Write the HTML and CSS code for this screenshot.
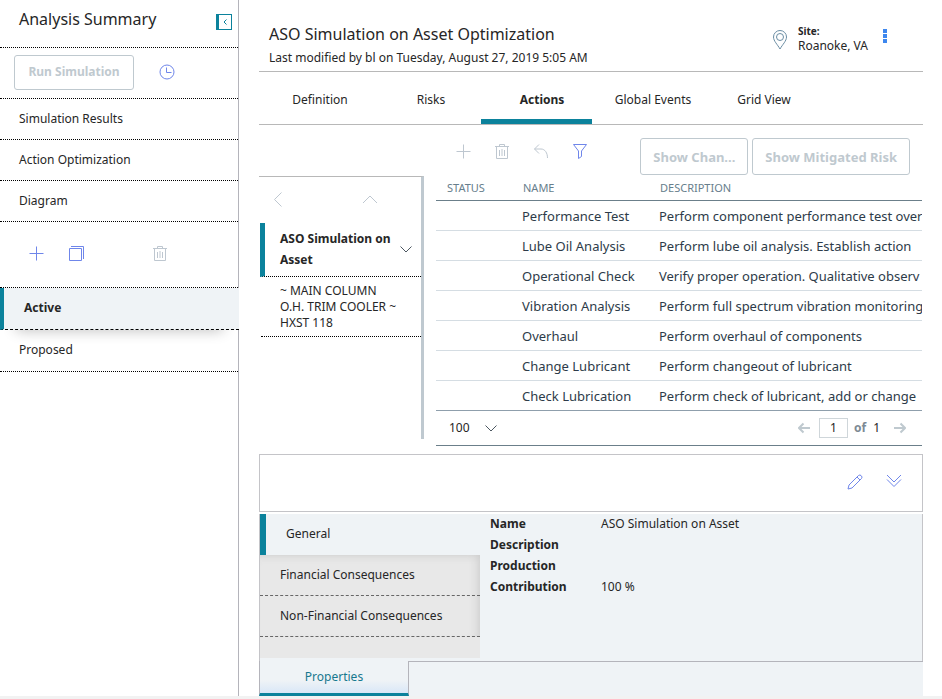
FILE: index.html
```html
<!DOCTYPE html>
<html lang="en">
<head>
<meta charset="utf-8">
<title>Analysis Summary</title>
<link rel="stylesheet" href="styles.css">
</head>
<body>
<svg class="defs" aria-hidden="true">
  <symbol id="i-plus" viewBox="0 0 16 16"><path d="M8.500 1.500v14M1.500 8.500h14"/></symbol>
  <symbol id="i-trash" viewBox="0 0 16 16"><path d="M1 3.500h14M2.500 3.500v12h11v-12M5.500 3V1.500h5V3M5.500 7v6M8 6v7M10.500 7v6"/></symbol>
  <symbol id="i-left" viewBox="0 0 16 16"><path d="M11.500 1.500L4.500 8.500l7 7"/></symbol>
  <symbol id="i-up" viewBox="0 0 16 16"><path d="M1 12l7-7 7 7"/></symbol>
  <symbol id="i-down" viewBox="0 0 12 12"><path d="M.5 3.500L6 9l5.500-5.500"/></symbol>
</svg>
<div class="app">
  <aside class="sidebar">
    <header class="side-head">
      <h1 class="title">Analysis Summary</h1>
      <button class="collapse" aria-label="Collapse"><svg viewBox="0 0 12 12"><path d="M7.500 3.500L5 6l2.500 2.500"/></svg></button>
    </header>
    <div class="run-row">
      <button class="btn btn-run" disabled>Run Simulation</button>
      <button class="icon" aria-label="History"><svg viewBox="0 0 16 16"><circle cx="8" cy="8" r="7"/><path d="M7.500 3.500v5h5"/></svg></button>
    </div>
    <nav class="side-nav">
      <a href="#">Simulation Results</a>
      <a href="#">Action Optimization</a>
      <a href="#">Diagram</a>
    </nav>
    <div class="side-tools">
      <button class="icon" aria-label="Add"><svg><use href="#i-plus"/></svg></button>
      <button class="icon" aria-label="Copy"><svg viewBox="0 0 16 16"><path d="M1.500 3.500h12v12h-12zM3 1.500h12.500V14"/></svg></button>
      <button class="icon muted push" aria-label="Delete" disabled><svg><use href="#i-trash"/></svg></button>
    </div>
    <nav class="side-nav views">
      <a class="active" href="#">Active</a>
      <a href="#">Proposed</a>
    </nav>
  </aside>

  <main class="main">
    <header class="page-head">
      <div class="page-name">
        <h2 class="title">ASO Simulation on Asset Optimization</h2>
        <p>Last modified by bl on Tuesday, August 27, 2019 5:05 AM</p>
      </div>
      <svg class="pin" viewBox="0 0 14 20"><path d="M7 19C4.500 14.500.5 11 .5 7a6.500 6.500 0 0 1 13 0c0 4-4 7.500-6.500 12z"/><circle cx="7" cy="7" r="3.500"/></svg>
      <div class="site"><strong>Site:</strong><span>Roanoke, VA</span></div>
      <button class="more" aria-label="More"><i></i><i></i><i></i></button>
    </header>

    <nav class="tabs">
      <a href="#">Definition</a>
      <a href="#">Risks</a>
      <a class="active" href="#">Actions</a>
      <a href="#">Global Events</a>
      <a href="#">Grid View</a>
    </nav>

    <div class="split">
      <section class="tree">
        <div class="tree-tools">
          <button class="icon muted" aria-label="Back"><svg><use href="#i-left"/></svg></button>
          <button class="icon muted" aria-label="Up"><svg><use href="#i-up"/></svg></button>
        </div>
        <a class="node" href="#"><span>ASO Simulation on Asset</span><svg class="chev"><use href="#i-down"/></svg></a>
        <a class="leaf" href="#">~ MAIN COLUMN O.H.&nbsp;TRIM COOLER&nbsp;~ HXST&nbsp;118</a>
      </section>

      <section class="grid">
        <div class="grid-tools">
          <button class="icon muted" aria-label="Add" disabled><svg><use href="#i-plus"/></svg></button>
          <button class="icon muted" aria-label="Delete" disabled><svg><use href="#i-trash"/></svg></button>
          <button class="icon muted" aria-label="Undo" disabled><svg viewBox="0 0 16 16"><path d="M6 1.500L1.500 6 6 10.500M1.500 6H8c4 0 6.500 4 6.500 9"/></svg></button>
          <button class="icon" aria-label="Filter"><svg viewBox="0 0 16 16"><path d="M1.500 1.500h13L9.500 8v5.500l-3 2V8z"/></svg></button>
          <div class="grid-actions">
            <button class="btn btn-grid" disabled>Show Chan...</button>
            <button class="btn btn-grid" disabled>Show Mitigated Risk</button>
          </div>
        </div>
        <div class="table-wrap">
          <table>
            <thead><tr><th class="c-status">STATUS</th><th class="c-name">NAME</th><th>DESCRIPTION</th></tr></thead>
            <tbody>
              <tr><td></td><td>Performance Test</td><td>Perform component performance test over</td></tr>
              <tr><td></td><td>Lube Oil Analysis</td><td>Perform lube oil analysis. Establish action</td></tr>
              <tr><td></td><td>Operational Check</td><td>Verify proper operation. Qualitative observ</td></tr>
              <tr><td></td><td>Vibration Analysis</td><td>Perform full spectrum vibration monitoring</td></tr>
              <tr><td></td><td>Overhaul</td><td>Perform overhaul of components</td></tr>
              <tr><td></td><td>Change Lubricant</td><td>Perform changeout of lubricant</td></tr>
              <tr><td></td><td>Check Lubrication</td><td>Perform check of lubricant, add or change</td></tr>
            </tbody>
          </table>
        </div>
        <footer class="pager">
          <select class="size" aria-label="Rows per page"><option>100</option></select>
          <svg class="chev"><use href="#i-down"/></svg>
          <button class="arrow" aria-label="Previous page" disabled><svg viewBox="0 0 12 12"><path d="M5.500 1.500L1 6l4.500 4.500M1 6h11"/></svg></button>
          <input class="page" type="text" value="1" aria-label="Page">
          <span class="of">of</span><span class="total">1</span>
          <button class="arrow" aria-label="Next page" disabled><svg viewBox="0 0 12 12"><path d="M6.500 1.500L11 6l-4.500 4.500M11 6H0"/></svg></button>
        </footer>
      </section>
    </div>

    <div class="panel-bar">
      <button class="icon" aria-label="Edit"><svg viewBox="0 0 16 16"><path d="M1 15l1-4L11.500 1.500q1.500-1 2.500 0l.5.5q1 1 0 2.500L5 14zM10 3l3 3"/></svg></button>
      <button class="icon" aria-label="Collapse panel"><svg viewBox="0 0 16 16"><path d="M1 1l7 7 7-7M1 5.500l7 7 7-7"/></svg></button>
    </div>
    <section class="detail">
      <nav class="detail-nav">
        <a class="active" href="#">General</a>
        <div class="shade">
          <a href="#">Financial Consequences</a>
          <a href="#">Non-Financial Consequences</a>
        </div>
      </nav>
      <dl class="props">
        <dt>Name</dt><dd>ASO Simulation on Asset</dd>
        <dt>Description</dt><dd></dd>
        <dt>Production</dt><dd></dd>
        <dt>Contribution</dt><dd>100 %</dd>
      </dl>
    </section>
    <div class="bottom-tabs"><a href="#">Properties</a><span class="rest"></span></div>
  </main>
</div>
</body>
</html>
```
FILE: styles.css
```css
* { box-sizing: border-box; }
body {
  margin: 0;
  background: #f2f2f2;
  color: #262626;
  font: 12px/20px "Noto Sans", "Open Sans", sans-serif;
}
h1, h2, p, dl, dd { margin: 0; }
a { color: inherit; text-decoration: none; }
button { padding: 0; border: 0; background: none; font: inherit; }
svg { display: block; fill: none; stroke: currentColor; }
.defs { position: absolute; width: 0; height: 0; }
.app { display: flex; min-height: calc(100vh - 3px); background: #fff; }
.title { font-size: 16px; line-height: 24px; font-weight: 400; }

.icon { width: 16px; height: 16px; color: #6f86ea; flex: none; }
.icon svg { width: 16px; height: 16px; }
.muted { color: #bec7d0; }
.btn {
  border: 1px solid #bfc9cf;
  border-radius: 3px;
  background: #fff;
  color: #bfc9cf;
  font-weight: 700;
  white-space: nowrap;
}

.sidebar { width: 239px; flex: none; border-right: 1px solid #b4b4bb; }
.side-head {
  display: flex;
  justify-content: space-between;
  height: 48px;
  padding: 7px 6px 0 19px;
  border-bottom: 1px dotted #000;
}
.collapse {
  width: 16px;
  height: 16px;
  margin-top: 7px;
  border: 1px solid #0b829c;
  border-left-width: 3px;
  color: #0b829c;
}
.collapse svg { width: 12px; height: 12px; }
.run-row {
  display: flex;
  align-items: center;
  gap: 25px;
  height: 51px;
  padding: 0 0 2px 14px;
  border-bottom: 1px dotted #000;
}
.btn-run { width: 120px; height: 35px; }
.side-nav a {
  display: block;
  height: 41px;
  padding-left: 19px;
  line-height: 40px;
  border-bottom: 1px dotted #000;
}
.views a { height: 42px; }
.side-nav .active {
  padding-left: 20px;
  border-left: 4px solid #0b829c;
  border-bottom: 1px dashed #000;
  margin-right: -1px;
  background: #eff3f6;
  font-weight: 700;
  box-shadow: 0 16px 14px -16px #b4b4b4;
}
.side-tools {
  display: flex;
  align-items: center;
  gap: 24px;
  height: 66px;
  padding: 0 70px 3px 28px;
  border-bottom: 1px dotted #000;
}
.push { margin-left: auto; }

.main { flex: 1; min-width: 0; padding: 0 19px 0 20px; }
.page-head {
  display: flex;
  height: 72px;
  padding: 22px 36px 0 10px;
  border-bottom: 1px solid #b8b8b8;
}
.page-name { flex: 1; white-space: nowrap; }
.page-name p { line-height: 24px; }
.pin { width: 14px; height: 20px; margin: 8px 11px 0 0; color: #6a8da3; }
.site { display: flex; flex-direction: column; padding-top: 2px; line-height: 16px; }
.site strong { font-size: 10px; line-height: 14px; }
.more { display: flex; flex-direction: column; gap: 1px; margin: 7px 0 0 15px; }
.more i { width: 4px; height: 4px; background: #3d87ee; }

.tabs { display: flex; height: 53px; border-bottom: 1px solid #b8b8b8; }
.tabs a { width: 111px; padding-left: 11px; text-align: center; line-height: 56px; }
.tabs .active { font-weight: 700; border-bottom: 5px solid #0b829c; }

.split { display: flex; gap: 12px; padding-right: 1px; }
.tree {
  width: 165px;
  flex: none;
  margin: 51px 0 7px 0;
  border-top: 1px solid #b8b8b8;
  border-right: 3px solid #bfc9d0;
}
.tree-tools { display: flex; gap: 76px; height: 46px; padding: 14px 11px; }
.node {
  display: flex;
  align-items: center;
  justify-content: space-between;
  height: 54px;
  padding: 0 9px 2px 15px;
  margin-left: 1px;
  border-left: 5px solid #0b829c;
  border-bottom: 1px dotted #000;
  font-weight: 700;
  line-height: 21px;
}
.chev { width: 12px; height: 12px; flex: none; color: #4c5761; }
.leaf {
  display: block;
  height: 60px;
  margin-left: 2px;
  padding: 6px 20px 0 19px;
  line-height: 16px;
  border-bottom: 1px dotted #000;
}

.grid { flex: 1; min-width: 0; }
.grid-tools { display: flex; align-items: center; gap: 23px; height: 51px; padding: 0 12px 0 19px; }
.grid-tools .icon { margin-top: 1px; }
.grid-actions { display: flex; gap: 4px; margin: 12px 0 0 auto; }
.btn-grid { height: 37px; padding: 0 12px; font-size: 13px; }
.table-wrap { overflow: hidden; }
table { width: 100%; border-collapse: separate; border-spacing: 0; table-layout: fixed; color: #2d3b49; }
th {
  height: 25px;
  padding: 0 0 0 11px;
  border-bottom: 1px solid #6b7f8a;
  color: #677e8c;
  font-size: 11px;
  font-weight: 400;
  text-align: left;
}
.c-status { width: 76px; }
.c-name { width: 137px; }
td {
  height: 30px;
  padding: 0 0 0 10px;
  border-bottom: 1px solid #d5dde3;
  font-size: 13px;
  white-space: nowrap;
}
tr:last-child td { border-bottom-color: #8f9fac; }
.pager {
  display: flex;
  align-items: center;
  height: 35px;
  padding: 0 16px 0 13px;
  border-bottom: 1px solid #6b7f8a;
}
.size { appearance: none; width: 36px; padding: 0; border: 0; background: none; color: inherit; font: inherit; }
.arrow { width: 12px; height: 12px; color: #bfc9cf; }
.arrow svg { width: 12px; height: 12px; stroke-width: 2; }
.pager .chev + .arrow { margin-left: auto; }
.page {
  width: 29px;
  height: 20px;
  margin: 0 6px 0 9px;
  padding: 0;
  border: 1px solid #cfd6da;
  color: inherit;
  font: inherit;
  text-align: center;
}
.of { color: #7d8a94; font-weight: 700; }
.total { margin: 0 14px 0 7px; }

.panel-bar {
  display: flex;
  justify-content: flex-end;
  align-items: center;
  gap: 23px;
  height: 58px;
  margin: 8px 0 2px;
  padding: 0 20px 2px 0;
  border: 1px solid #c4c4c8;
}
.detail {
  display: flex;
  min-height: 147px;
  border: solid #c4c4c8;
  border-width: 0 1px 0 1px;
  background: #eff3f6;
}
.detail-nav { width: 220px; flex: none; margin-bottom: 3px; background: #e8e8e8; }
.detail-nav a { display: block; height: 41px; padding-left: 20px; line-height: 40px; }
.detail-nav .active { border-left: 6px solid #0b829c; background: #eff3f6; }
.shade { box-shadow: inset -8px 0 10px -6px #ccc, inset 0 8px 10px -8px #ccc; }
.shade a { border-bottom: 1px dashed #666; }
.props {
  display: grid;
  grid-template-columns: 111px 1fr;
  grid-auto-rows: 21px;
  flex: 1;
  padding-left: 10px;
}
dt { font-weight: 700; }
.bottom-tabs { display: flex; height: 35px; background: #eff3f6; }
.bottom-tabs a {
  width: 150px;
  border: solid #b4b4bb;
  border-width: 0 1px;
  border-bottom: 3px solid #0b829c;
  background: linear-gradient(#eff3f6 60%, #d9e7f7);
  color: #17788f;
  line-height: 32px;
  text-align: center;
}
.rest { flex: 1; border-top: 1px solid #b4b4bb; }
```
